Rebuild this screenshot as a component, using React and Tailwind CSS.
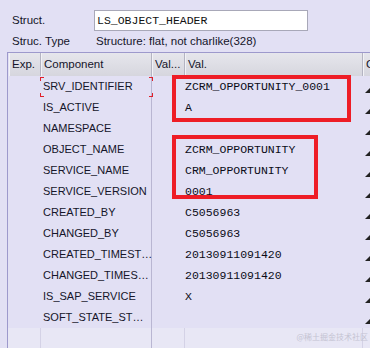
import React from 'react';

const rows = [
  ['SRV_IDENTIFIER', 'ZCRM_OPPORTUNITY_0001'],
  ['IS_ACTIVE', 'A'],
  ['NAMESPACE', ''],
  ['OBJECT_NAME', 'ZCRM_OPPORTUNITY'],
  ['SERVICE_NAME', 'CRM_OPPORTUNITY'],
  ['SERVICE_VERSION', '0001'],
  ['CREATED_BY', 'C5056963'],
  ['CHANGED_BY', 'C5056963'],
  ['CREATED_TIMEST…', '20130911091420'],
  ['CHANGED_TIMES…', '20130911091420'],
  ['IS_SAP_SERVICE', 'X'],
  ['SOFT_STATE_ST…', ''],
];

const sans = "font-['Liberation_Sans',Arial,sans-serif]";
const mono = "font-['Liberation_Mono','Courier_New',monospace]";

const HeadCell = ({ w, children }) => (
  <div className={`${w} h-full shrink-0 flex items-center pl-[2px] whitespace-nowrap overflow-hidden bg-gradient-to-b from-[#e6e6ec] to-[#d6d6de] border-r border-[#b4b4c2] border-l border-l-[#f2f2f6]`}>
    {children}
  </div>
);

const Corner = ({ className }) => <div className={`absolute w-[4px] h-[4px] border-[#e0202a] ${className}`} />;

export default function App() {
  return (
    <div className={`relative w-[370px] h-[348px] overflow-hidden bg-[#e2e0f4] text-[11.5px] text-[#15152a] ${sans}`}>
      <div className="flex items-center h-[21px] mt-[10px]">
        <span className="w-[94px] pl-[12px] shrink-0">Struct.</span>
        <div className={`w-[214px] h-[21px] bg-white border border-[#a8a8b8] flex items-center pl-[2px] text-[11.5px] text-[#111] ${mono}`}>
          LS_OBJECT_HEADER
        </div>
      </div>
      <div className="flex items-center h-[21px]">
        <span className="w-[96px] pl-[12px] shrink-0">Struc. Type</span>
        <span>Structure: flat, not charlike(328)</span>
      </div>

      <div className="ml-[7px] border-l border-t border-[#9d99cc]">
        <div className="flex h-[23px] pl-[1px]">
          <HeadCell w="w-[32px]">Exp.</HeadCell>
          <HeadCell w="w-[111px]">Component</HeadCell>
          <HeadCell w="w-[33px]">Val...</HeadCell>
          <HeadCell w="w-[178px]">Val.</HeadCell>
          <div className="w-[2px]" />
          <HeadCell w="w-[10px]">C</HeadCell>
        </div>
        {rows.map(([name, val]) => (
          <div key={name} className="flex h-[21px]">
            <div className="w-[33px] shrink-0" />
            <div className="w-[111px] shrink-0 flex items-center pl-[2px] text-[11px] border-r border-[#b9b6d2] whitespace-nowrap">{name}</div>
            <div className="w-[33px] shrink-0" />
            <div className={`w-[178px] shrink-0 flex items-center text-[11.5px] text-[#0c0c18] ${mono}`}>{val}</div>
            <div className="flex-1 relative">
              <svg className="absolute left-[2px] top-[12px]" width="6" height="5" viewBox="0 0 6 5">
                <path d="M0 5 L5 0 L5 5 Z" fill="#222" />
              </svg>
            </div>
          </div>
        ))}
        <div className="flex h-[21px] bg-[#e8e7f5]">
          <div className="w-[33px] shrink-0 border-r border-[#d4d2e6]" />
          <div className="w-[111px] shrink-0 border-r border-[#b9b6d2]" />
          <div className="w-[33px] shrink-0 border-r border-[#d4d2e6]" />
          <div className="w-[178px] shrink-0 border-r border-[#d4d2e6]" />
        </div>
      </div>

      {/* focus corners on first row */}
      <Corner className="left-[40px] top-[77px] border-l border-t" />
      <Corner className="left-[40px] top-[93px] border-l border-b" />
      <Corner className="left-[149px] top-[77px] border-r border-t" />
      <Corner className="left-[149px] top-[93px] border-r border-b" />

      {/* red annotation boxes */}
      <div className="absolute left-[172px] top-[75px] w-[179px] h-[47px] border-[4px] border-[#ee1d26]" />
      <div className="absolute left-[172px] top-[135px] w-[146px] h-[64px] border-[4px] border-[#ee1d26]" />

      <div className="absolute right-[2px] bottom-[5px] text-[8px] text-[#c4c3d2] font-['Noto_Sans_CJK_SC',sans-serif]">
        @稀土掘金技术社区
      </div>
    </div>
  );
}
